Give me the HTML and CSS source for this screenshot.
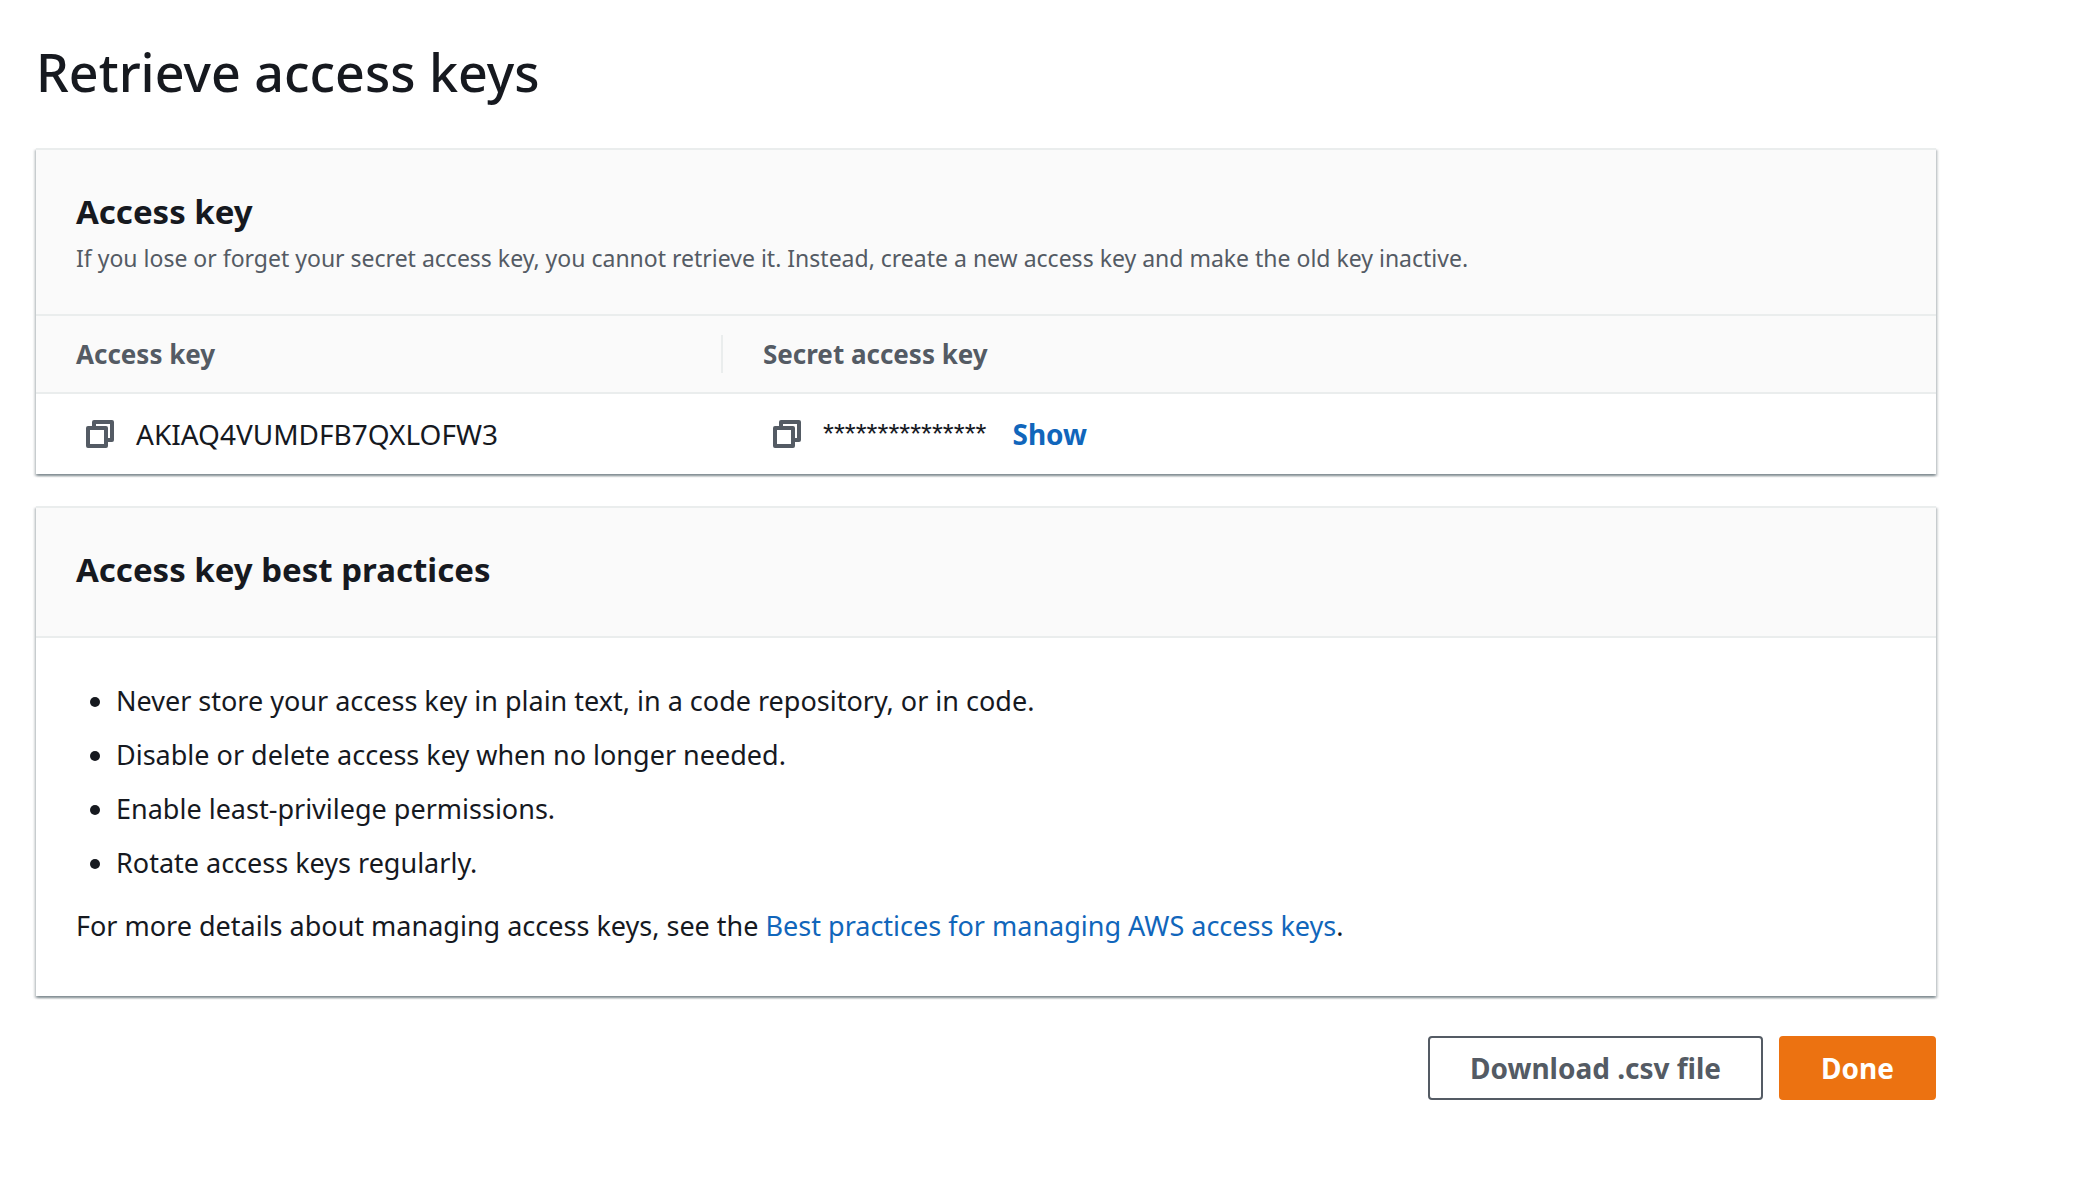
FILE: index.html
```html
<!DOCTYPE html>
<html lang="en">

<head>
    <meta charset="UTF-8">
    <meta name="viewport" content="width=device-width, initial-scale=1.0">
    <title>Retrieve access keys</title>
    <link rel="stylesheet" href="styles.css">
</head>

<body>
    <main class="container">
        <h1>Retrieve access keys</h1>

        <section class="panel">
            <div class="panel-header">
                <h2>Access key</h2>
                <p class="description">If you lose or forget your secret access key, you cannot retrieve it. Instead, create a new access key and make the old key inactive.</p>
            </div>
            <table class="keys">
                <thead>
                    <tr>
                        <th class="key-column"><div class="column-title">Access key</div></th>
                        <th><div class="column-title">Secret access key</div></th>
                    </tr>
                </thead>
                <tbody>
                    <tr>
                        <td>
                            <div class="key-cell">
                                <button class="copy" aria-label="Copy access key">
                                    <svg width="28" height="28" viewBox="0 0 28 28">
                                        <path d="M8 6V2h18v18h-4M2 8h18v18H2z" />
                                    </svg>
                                </button>
                                <span>AKIAQ4VUMDFB7QXLOFW3</span>
                            </div>
                        </td>
                        <td>
                            <div class="key-cell">
                                <button class="copy" aria-label="Copy secret access key">
                                    <svg width="28" height="28" viewBox="0 0 28 28">
                                        <path d="M8 6V2h18v18h-4M2 8h18v18H2z" />
                                    </svg>
                                </button>
                                <span class="secret">***************</span>
                                <button class="show">Show</button>
                            </div>
                        </td>
                    </tr>
                </tbody>
            </table>
        </section>

        <section class="panel">
            <div class="panel-header">
                <h2>Access key best practices</h2>
            </div>
            <div class="panel-content">
                <ul class="practices">
                    <li>Never store your access key in plain text, in a code repository, or in code.</li>
                    <li>Disable or delete access key when no longer needed.</li>
                    <li>Enable least-privilege permissions.</li>
                    <li>Rotate access keys regularly.</li>
                </ul>
                <p>For more details about managing access keys, see the <a href="#">Best practices for managing AWS access keys</a>.</p>
            </div>
        </section>

        <div class="actions">
            <button class="btn">Download .csv file</button>
            <button class="btn btn-primary">Done</button>
        </div>
    </main>
</body>

</html>
```
FILE: styles.css
```css
* {
    box-sizing: border-box;
}

body {
    margin: 0;
    background-color: #fff;
    color: #16191f;
    font-family: "Noto Sans", "Open Sans", sans-serif;
    font-size: 27px;
    line-height: 44px;
}

h1, h2, p, ul {
    margin: 0;
}

.container {
    padding: 36px 138px 36px 36px;
}

h1 {
    margin-bottom: 40px;
    font-size: 52px;
    font-weight: 500;
    line-height: 72px;
}

.panel {
    margin-bottom: 32px;
    background-color: #fff;
    border-top: 2px solid #eaeded;
    box-shadow: 0 2px 2px 0 rgba(0, 28, 36, 0.3), 2px 2px 2px 0 rgba(0, 28, 36, 0.15), -2px 2px 2px 0 rgba(0, 28, 36, 0.15);
}

.panel-header {
    padding: 38px 40px 42px;
    background-color: #fafafa;
    border-bottom: 2px solid #eaeded;
}

h2 {
    font-size: 33px;
    font-weight: 700;
    line-height: 48px;
}

.description {
    margin-top: 8px;
    color: #545b64;
    font-size: 23px;
    line-height: 28px;
}

.keys {
    width: 100%;
    border-collapse: collapse;
    table-layout: fixed;
}

.keys th {
    padding: 19px 0;
    background-color: #fafafa;
    border-bottom: 2px solid #eaeded;
    color: #545b64;
    font-size: 26px;
    text-align: left;
}

.keys td {
    padding: 0;
}

.key-column {
    width: 687px;
}

.column-title {
    padding: 0 40px;
    line-height: 38px;
}

.key-column .column-title {
    border-right: 2px solid #eaeded;
}

.key-cell {
    display: flex;
    align-items: center;
    height: 80px;
    padding: 0 50px;
    font-size: 28px;
}

.copy {
    display: flex;
    margin-right: 22px;
    padding: 0;
    background: none;
    border: none;
    cursor: pointer;
}

.copy svg {
    fill: none;
    stroke: #545b64;
    stroke-width: 4;
    stroke-linejoin: round;
}

.secret {
    font-family: "Liberation Sans", Arial, sans-serif;
}

.show {
    margin-left: 26px;
    padding: 0;
    background: none;
    border: none;
    color: #1166bb;
    font: inherit;
    font-weight: 700;
    cursor: pointer;
}

.panel-content {
    padding: 36px 40px 48px;
}

.practices {
    padding: 0 0 14px 40px;
}

.practices li {
    padding: 5px 0;
}

a {
    color: #1166bb;
    text-decoration: none;
}

a:hover {
    text-decoration: underline;
}

.actions {
    display: flex;
    justify-content: flex-end;
    gap: 16px;
    padding-top: 8px;
}

.btn {
    padding: 8px 40px;
    background-color: #fff;
    border: 2px solid #545b64;
    border-radius: 4px;
    color: #545b64;
    font-family: inherit;
    font-size: 28px;
    font-weight: 700;
    line-height: 44px;
    cursor: pointer;
}

.btn-primary {
    background-color: #ec7211;
    border-color: #ec7211;
    color: #fff;
}
```
